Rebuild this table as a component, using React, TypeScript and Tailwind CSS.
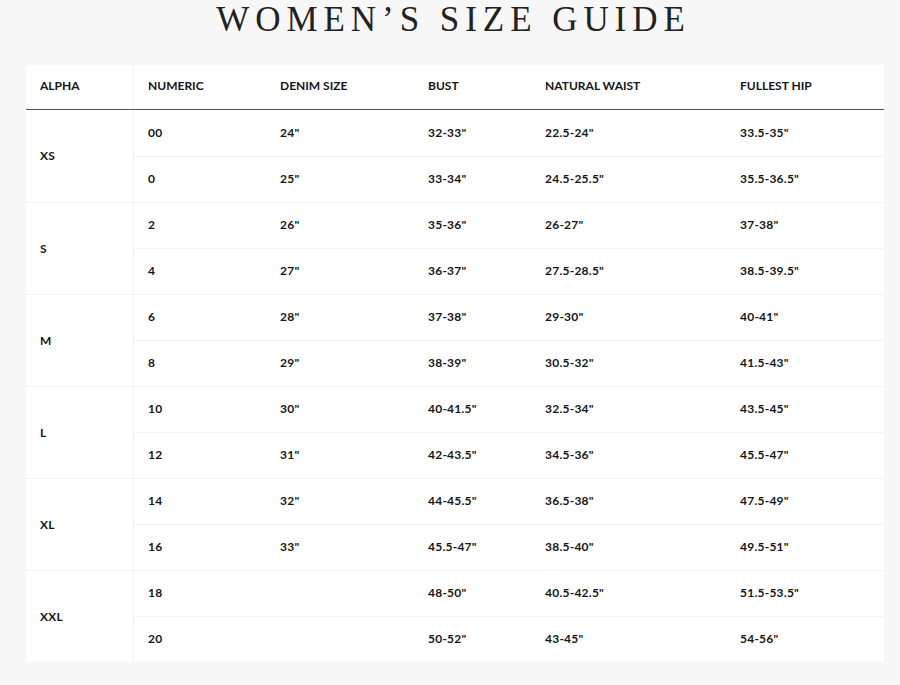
import React from "react";

const groups = [
  { alpha: "XS", rows: [["00", "24\"", "32-33\"", "22.5-24\"", "33.5-35\""], ["0", "25\"", "33-34\"", "24.5-25.5\"", "35.5-36.5\""]] },
  { alpha: "S", rows: [["2", "26\"", "35-36\"", "26-27\"", "37-38\""], ["4", "27\"", "36-37\"", "27.5-28.5\"", "38.5-39.5\""]] },
  { alpha: "M", rows: [["6", "28\"", "37-38\"", "29-30\"", "40-41\""], ["8", "29\"", "38-39\"", "30.5-32\"", "41.5-43\""]] },
  { alpha: "L", rows: [["10", "30\"", "40-41.5\"", "32.5-34\"", "43.5-45\""], ["12", "31\"", "42-43.5\"", "34.5-36\"", "45.5-47\""]] },
  { alpha: "XL", rows: [["14", "32\"", "44-45.5\"", "36.5-38\"", "47.5-49\""], ["16", "33\"", "45.5-47\"", "38.5-40\"", "49.5-51\""]] },
  { alpha: "XXL", rows: [["18", "", "48-50\"", "40.5-42.5\"", "51.5-53.5\""], ["20", "", "50-52\"", "43-45\"", "54-56\""]] },
];

function Cells({ vals, head }: { vals: string[]; head?: boolean }) {
  const widths = ["w-[132px]", "w-[148px]", "w-[117px]", "w-[195px]", "flex-1"];
  return (
    <>
      {vals.map((v, i) => (
        <div
          key={i}
          className={`${widths[i]} text-[12px] font-bold text-[#161616] ${head ? "tracking-[0px]" : "tracking-[0.02em]"}`}
        >
          {v}
        </div>
      ))}
    </>
  );
}

export default function App() {
  return (
    <div className="w-[900px] h-[685px] bg-[#f7f7f7] overflow-hidden" style={{ fontFamily: "Lato, 'Open Sans', sans-serif" }}>
      <h1
        className="h-[65px] pt-[1px] pl-[7px] text-center text-[35px] leading-[38px] tracking-[0.17em] text-[#222] font-normal"
        style={{ fontFamily: "'Liberation Serif', 'DejaVu Serif', serif" }}
      >
        WOMEN’S SIZE GUIDE
      </h1>
      <div className="mx-[26px] w-[858px]">
        <div className="flex h-[45px] bg-white border-b border-[#555]">
          <div className="w-[108px] border-r border-[#f3f3f3] flex items-center pl-[14px] pb-[2px] text-[12px] font-bold text-[#161616]">
            ALPHA
          </div>
          <div className="flex-1 flex items-center pl-[14px] pb-[2px]">
            <Cells head vals={["NUMERIC", "DENIM SIZE", "BUST", "NATURAL WAIST", "FULLEST HIP"]} />
          </div>
        </div>
        {groups.map((g, gi) => (
          <div key={gi} className="flex h-[92px]">
            <div
              className={`w-[108px] bg-white border-r border-r-[#f3f3f3] flex items-center pl-[14px] text-[12px] font-bold text-[#161616] tracking-[0.02em] ${
                gi > 0 ? "border-t border-t-[#f3f3f3]" : ""
              }`}
            >
              {g.alpha}
            </div>
            <div className="flex-1 flex flex-col">
              {g.rows.map((r, ri) => (
                <div
                  key={ri}
                  className={`h-[46px] bg-white flex items-center pl-[14px] pb-[1px] ${
                    gi > 0 || ri > 0 ? "border-t border-[#f3f3f3]" : ""
                  }`}
                >
                  <Cells vals={r} />
                </div>
              ))}
            </div>
          </div>
        ))}
      </div>
    </div>
  );
}
